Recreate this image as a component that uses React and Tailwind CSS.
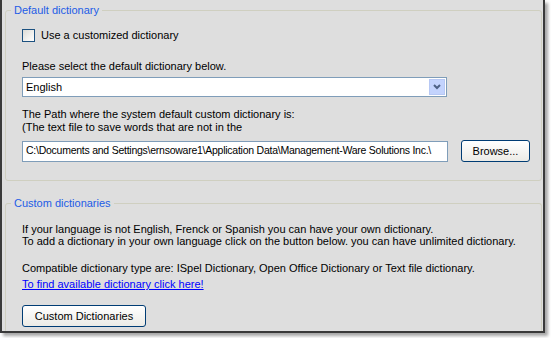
import React from "react";

export default function App() {
  const font = { fontFamily: '"Liberation Sans", Arial, sans-serif' };
  return (
    <div className="w-[551px] h-[338px] bg-white relative overflow-hidden" style={font}>
      <div className="w-[545px] h-[333px] bg-[#dedede] border-l-2 border-r-2 border-b-2 border-[#3a3a3a] shadow-[3px_3px_3px_rgba(0,0,0,0.35)] flex flex-col text-[11px] text-black">
        {/* Default dictionary group */}
        <div className="relative ml-[3px] mr-[1px] mt-[10px] h-[171px] border border-[#cfcfc0] rounded-[3px]">
          <div className="absolute left-[5px] top-[-8px] bg-[#dedede] px-[3px] text-[#1d5ce6] leading-[14px]">
            Default dictionary
          </div>
          <div className="flex flex-col pl-[16px] pr-[10px] pt-[18px]">
            <div className="flex items-center gap-[6px] h-[13px]">
              <div className="w-[13px] h-[13px] border border-[#1c5180] bg-gradient-to-br from-[#dcdcd7] to-white"></div>
              <span className="leading-[13px]">Use a customized dictionary</span>
            </div>
            <div className="mt-[18px] leading-[13px]">Please select the default dictionary below.</div>
            <div className="mt-[4px] w-[425px] h-[20px] border border-[#7f9db9] bg-white flex items-center justify-between">
              <span className="pl-[3px] leading-[14px]">English</span>
              <div className="w-[16px] h-[16px] mr-[1px] bg-[#c3d3fd] border border-[#b7c8f4] flex items-center justify-center">
                <svg width="8" height="6" viewBox="0 0 8 6">
                  <path d="M1 1 L4 4 L7 1" stroke="#4d6185" strokeWidth="2" fill="none" />
                </svg>
              </div>
            </div>
            <div className="mt-[11px] leading-[13px]">The Path where the system default custom dictionary is:</div>
            <div className="leading-[13px]">(The text file to save words that are not in the</div>
            <div className="mt-[6px] flex items-center">
              <div className="w-[426px] h-[21px] border border-[#7f9db9] bg-white flex items-center pl-[3px] whitespace-nowrap overflow-hidden text-[10.5px] tracking-[-0.25px]">
                C:\Documents and Settings\ernsoware1\Application Data\Management-Ware Solutions Inc.\
              </div>
              <button className="ml-[13px] w-[69px] h-[22px] border border-[#003c74] rounded-[3px] bg-gradient-to-b from-white to-[#ecebe6] text-[11px] text-black">
                Browse...
              </button>
            </div>
          </div>
        </div>
        {/* Custom dictionaries group */}
        <div className="relative ml-[3px] mr-[1px] mt-[22px] flex-1 border-t border-l border-r border-[#cfcfc0] rounded-t-[3px]">
          <div className="absolute left-[5px] top-[-8px] bg-[#dedede] px-[3px] text-[#1d5ce6] leading-[14px]">
            Custom dictionaries
          </div>
          <div className="flex flex-col pl-[16px] pt-[19px]">
            <div className="leading-[12px]">If your language is not English, Frenck or Spanish you can have your own dictionary.</div>
            <div className="leading-[12px]">To add a dictionary in your own language click on the button below. you can have unlimited dictionary.</div>
            <div className="mt-[15px] leading-[13px]">Compatible dictionary type are: ISpel Dictionary, Open Office Dictionary or Text file dictionary.</div>
            <div className="mt-[3px] leading-[13px] text-[#0000ff] underline">To find available dictionary click here!</div>
            <button className="mt-[14px] w-[124px] h-[22px] border border-[#003c74] rounded-[3px] bg-gradient-to-b from-white to-[#ecebe6] text-[11px] text-black">
              Custom Dictionaries
            </button>
          </div>
        </div>
      </div>
    </div>
  );
}
